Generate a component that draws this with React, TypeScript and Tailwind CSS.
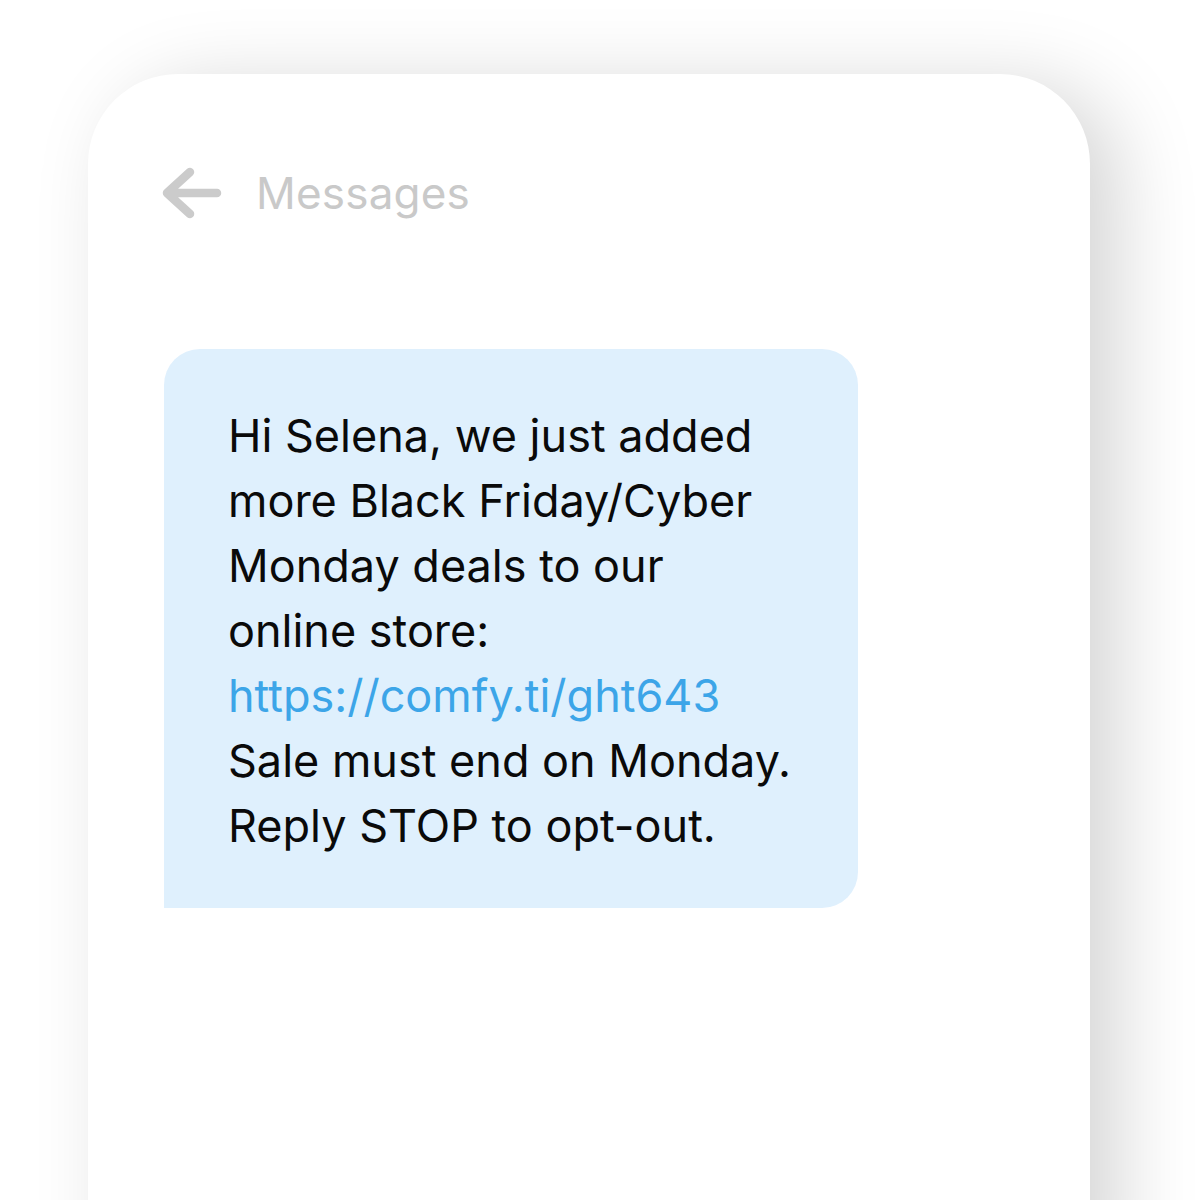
import React from 'react';

const lines = [
  'Hi Selena, we just added',
  'more Black Friday/Cyber',
  'Monday deals to our',
  'online store:',
];

const BackArrow: React.FC = () => (
  <svg width="64" height="56" viewBox="0 0 64 56" fill="none" className="shrink-0">
    <path
      d="M7 28 H57 M30 7 L7 28 L30 49"
      stroke="#cbcbcb"
      strokeWidth="8.5"
      strokeLinecap="round"
      strokeLinejoin="round"
    />
  </svg>
);

const App: React.FC = () => {
  return (
    <div className="w-[1200px] h-[1200px] overflow-hidden bg-white font-['Inter',sans-serif]">
      <div className="ml-[88px] mt-[74px] w-[1002px] h-[1200px] rounded-t-[90px] bg-white shadow-[28px_12px_80px_rgba(0,0,0,0.17)] pl-[72px]">
        <div className="flex items-center gap-[32px] pt-[91px] h-[147px]">
          <BackArrow />
          <span className="text-[44px] leading-none text-[#c9c9c9] tracking-[0.2px]">Messages</span>
        </div>
        <div className="mt-[128px] ml-[4px] w-[694px] bg-[#dff0fd] rounded-[36px] rounded-bl-none pl-[64px] pt-[54px] pb-[50px] text-[45px] leading-[65px] text-[#0a0a0a]">
          {lines.map((line) => (
            <div key={line}>{line}</div>
          ))}
          <div className="text-[#3ca5e8]">https://comfy.ti/ght643</div>
          <div>Sale must end on Monday.</div>
          <div>Reply STOP to opt-out.</div>
        </div>
      </div>
    </div>
  );
};

export default App;
